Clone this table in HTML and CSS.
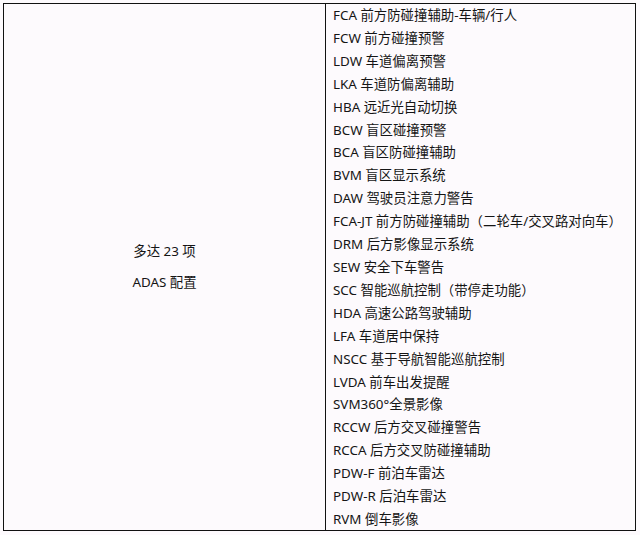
FILE: index.html
```html
<!DOCTYPE html>
<html lang="zh-CN">
<head>
<meta charset="utf-8">
<link rel="stylesheet" href="styles.css">
</head>
<body>
<div class="table">
  <div class="cell-left">
    <p class="line">多达 23 项</p>
    <p class="line">ADAS 配置</p>
  </div>
  <div class="cell-right">
    <p>FCA 前方防碰撞辅助-车辆/行人</p>
    <p>FCW 前方碰撞预警</p>
    <p>LDW 车道偏离预警</p>
    <p>LKA 车道防偏离辅助</p>
    <p>HBA 远近光自动切换</p>
    <p>BCW 盲区碰撞预警</p>
    <p>BCA 盲区防碰撞辅助</p>
    <p>BVM 盲区显示系统</p>
    <p>DAW 驾驶员注意力警告</p>
    <p>FCA-JT 前方防碰撞辅助（二轮车/交叉路对向车）</p>
    <p>DRM 后方影像显示系统</p>
    <p>SEW 安全下车警告</p>
    <p>SCC 智能巡航控制（带停走功能）</p>
    <p>HDA 高速公路驾驶辅助</p>
    <p>LFA 车道居中保持</p>
    <p>NSCC 基于导航智能巡航控制</p>
    <p>LVDA 前车出发提醒</p>
    <p>SVM360°全景影像</p>
    <p>RCCW 后方交叉碰撞警告</p>
    <p>RCCA 后方交叉防碰撞辅助</p>
    <p>PDW-F 前泊车雷达</p>
    <p>PDW-R 后泊车雷达</p>
    <p>RVM 倒车影像</p>
  </div>
</div>
</body>
</html>
```
FILE: styles.css
```css
html, body {
  margin: 0;
  padding: 0;
  background: #fdfafd;
}
body {
  font-family: "Noto Sans", "Noto Sans CJK SC", sans-serif;
  font-size: 13.4px;
  color: #151515;
}
p { margin: 0; }
.table {
  margin: 3px 0 0 3px;
  width: 633px;
  height: 528px;
  box-sizing: border-box;
  border: 1px solid #111;
  display: grid;
  grid-template-columns: 322px 1fr;
}
.cell-left {
  border-right: 1px solid #111;
  display: flex;
  flex-direction: column;
  justify-content: center;
  align-items: center;
  gap: 8px;
}
.cell-left .line {
  line-height: 23px;
}
.cell-right {
  padding-left: 7px;
}
.cell-right p {
  line-height: 22.9px;
  white-space: nowrap;
}
```
